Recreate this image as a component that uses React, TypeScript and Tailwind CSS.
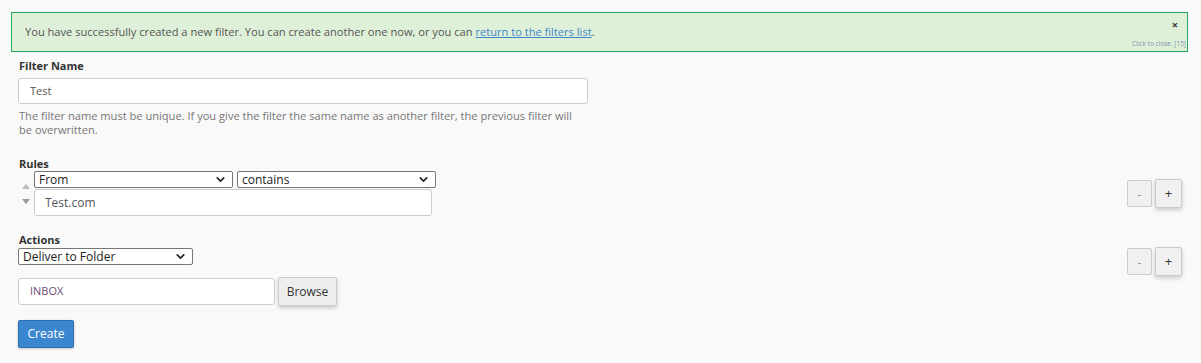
import { ChevronDown } from 'lucide-react';

function Select({ label, className }: { label: string; className: string }) {
  return (
    <div
      className={`flex items-center justify-between h-[17px] bg-white border border-[#767676] rounded-[2px] pl-[4px] pr-[5px] text-[12px] text-[#222] ${className}`}
    >
      <span className="leading-none">{label}</span>
      <ChevronDown className="w-[13px] h-[13px] text-[#222]" strokeWidth={3} />
    </div>
  );
}

function PlusMinus() {
  return (
    <div className="flex gap-[3px]">
      <button className="w-[25px] h-[27px] border border-[#ccc] bg-[#f0f0f0] text-[#888] text-[11px] leading-none rounded-[2px]">
        -
      </button>
      <button className="w-[27px] h-[29px] -mt-[1px] border border-[#ccc] bg-[#f0f0f0] text-[#333] text-[13px] leading-none rounded-[2px] shadow-[0_2px_4px_rgba(0,0,0,0.2)]">
        +
      </button>
    </div>
  );
}

export default function App() {
  return (
    <div className="w-[1201px] h-[363px] bg-[#f9f9f9] text-[#333] font-['Open_Sans',sans-serif] text-[12px] overflow-hidden">
      {/* Success notice */}
      <div className="pt-[12px] pl-[11px] pr-[13px]">
        <div className="relative h-[40px] bg-[#dff0d8] border border-[#27a75a] flex items-center pl-[13px]">
          <span className="text-[11.1px] text-[#555]">
            You have successfully created a new filter. You can create another one now, or you can{' '}
            <a className="text-[#3f87c9] underline">return to the filters list</a>.
          </span>
          <span className="absolute right-[9px] top-[6px] text-[11px] font-bold text-[#333] leading-none">×</span>
          <span className="absolute right-[1px] bottom-[4px] text-[6.5px] text-[#7a96b4] leading-none">
            Click to close. [15]
          </span>
        </div>
      </div>

      <div className="pl-[18px] pr-[19px]">
        {/* Filter name */}
        <div className="mt-[7px] pl-[1px] font-bold text-[11px] leading-[14px]">Filter Name</div>
        <div className="mt-[5px] w-[570px] h-[26px] bg-white border border-[#ccc] rounded-[3px] flex items-center pl-[11px] text-[11px] text-[#555]">
          Test
        </div>
        <div className="mt-[5px] w-[568px] pl-[1px] text-[11.1px] leading-[14px] text-[#777]">
          The filter name must be unique. If you give the filter the same name as another filter, the previous filter will
          be overwritten.
        </div>

        {/* Rules */}
        <div className="mt-[20px] pl-[1px] font-bold text-[11px] leading-[14px]">Rules</div>
        <div className="flex items-center justify-between">
          <div className="flex">
            <div className="w-[16px] flex flex-col items-center pt-[13px] gap-[10px]">
              <svg width="8" height="5" viewBox="0 0 8 5">
                <path d="M0 5 L4 0 L8 5 Z" fill="#bbb" />
              </svg>
              <svg width="8" height="5" viewBox="0 0 8 5">
                <path d="M0 0 L4 5 L8 0 Z" fill="#999" />
              </svg>
            </div>
            <div className="flex flex-col gap-[1px]">
              <div className="flex gap-[4px]">
                <Select label="From" className="w-[199px]" />
                <Select label="contains" className="w-[199px]" />
              </div>
              <div className="w-[398px] h-[27px] bg-white border border-[#ccc] rounded-[3px] flex items-center pl-[10px] text-[12px] text-[#555]">
                Test.com
              </div>
            </div>
          </div>
          <PlusMinus />
        </div>

        {/* Actions */}
        <div className="mt-[17px] pl-[1px] font-bold text-[11px] leading-[14px]">Actions</div>
        <div className="flex justify-between">
          <div className="flex flex-col">
            <Select label="Deliver to Folder" className="w-[175px] mt-[1px] pl-[3px]" />
            <div className="flex items-center gap-[3px] mt-[12px]">
              <div className="w-[257px] h-[27px] bg-white border border-[#ccc] rounded-[3px] flex items-center pl-[11px] text-[11px] text-[#6b4a7a]">
                INBOX
              </div>
              <button className="w-[59px] h-[29px] bg-[#eee] border border-[#ccc] rounded-[2px] text-[12px] text-[#333] shadow-[0_2px_4px_rgba(0,0,0,0.2)]">
                Browse
              </button>
            </div>
          </div>
          <div className="mt-[1px]">
            <PlusMinus />
          </div>
        </div>

        <button className="mt-[14px] w-[56px] h-[28px] bg-[#3a87d0] border border-[#2d6fae] rounded-[2px] text-white text-[12px] shadow-[0_1px_3px_rgba(0,0,0,0.2)]">
          Create
        </button>
      </div>
    </div>
  );
}
